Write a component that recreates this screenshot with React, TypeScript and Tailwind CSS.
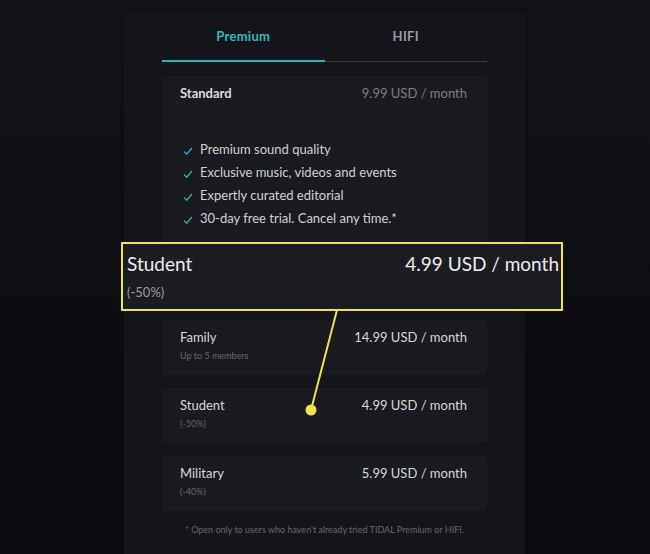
import React from "react";

const font = { fontFamily: "Lato, 'Noto Sans', sans-serif" };

function Check() {
  return (
    <svg width="10" height="10" viewBox="0 0 10 10" className="shrink-0 mt-[3px]">
      <path d="M1.5 6 L3.8 8.2 L8.5 2.5" fill="none" stroke="#2eb3b3" strokeWidth="1.3" strokeLinecap="round" strokeLinejoin="round" />
    </svg>
  );
}

function PlanCard({ name, price, sub }: { name: string; price: string; sub: string }) {
  return (
    <div className="h-[55px] rounded-[3px] bg-[#1a1b20] pl-[18px] pr-[20px] pt-[8px]">
      <div className="flex justify-between text-[13px] leading-[18px] text-[#d6d6d8]">
        <span>{name}</span>
        <span>{price}</span>
      </div>
      <div className="mt-[4px] text-[9px] leading-[12px] text-[#66676c]">{sub}</div>
    </div>
  );
}

export default function App() {
  const features = [
    "Premium sound quality",
    "Exclusive music, videos and events",
    "Expertly curated editorial",
    "30-day free trial. Cancel any time.*",
  ];
  return (
    <div className="relative w-[650px] h-[554px] overflow-hidden bg-gradient-to-b from-[#101216] to-[#0a0b0f]" style={font}>
      <div className="ml-[124px] mt-[13px] w-[401px] h-[541px] bg-[#15161b] px-[38px]">
        <div className="flex h-[49px]">
          <div className="flex-1 flex flex-col">
            <div className="flex-1 flex items-center justify-center text-[13px] font-bold text-[#2eb8b8] tracking-[0.3px]">Premium</div>
            <div className="h-[2px] bg-[#2eb3b3]" />
          </div>
          <div className="flex-1 flex flex-col">
            <div className="flex-1 flex items-center justify-center text-[13px] font-bold text-[#9c9da2] tracking-[0.3px]">HIFI</div>
            <div className="h-[2px] flex flex-col justify-end"><div className="h-[1px] bg-[#3a3b40]" /></div>
          </div>
        </div>

        <div className="mt-[14px] h-[231px] rounded-[3px] bg-[#1a1b20] pl-[18px] pr-[20px] pt-[8px]">
          <div className="flex justify-between text-[13px] leading-[18px]">
            <span className="font-bold text-[#dcdcde]">Standard</span>
            <span className="text-[#7c7d82]">9.99 USD / month</span>
          </div>
          <div className="mt-[36px] ml-[3px] flex flex-col">
            {features.map((f) => (
              <div key={f} className="flex items-center gap-[7px] h-[23px] text-[13px] text-[#d0d0d3]">
                <Check />
                <span>{f}</span>
              </div>
            ))}
          </div>
        </div>

        <div className="mt-[13px] flex flex-col gap-[13px]">
          <PlanCard name="Family" price="14.99 USD / month" sub="Up to 5 members" />
          <PlanCard name="Student" price="4.99 USD / month" sub="(-50%)" />
          <PlanCard name="Military" price="5.99 USD / month" sub="(-40%)" />
        </div>

        <div className="mt-[13px] text-center text-[9px] leading-[12px] text-[#66676c]">
          * Open only to users who haven't already tried TIDAL Premium or HIFI.
        </div>
      </div>

      <svg className="absolute left-0 top-0 pointer-events-none" width="650" height="554">
        <line x1="337" y1="310" x2="311" y2="410" stroke="#f2e34c" strokeWidth="2" />
        <circle cx="311" cy="410" r="5.5" fill="#f2e34c" />
      </svg>

      <div className="absolute left-[121px] top-[242px] w-[442px] h-[69px] border-2 border-[#f2e34c] bg-[#1c1d22] pl-[4px] pr-[2px] pt-[8px]">
        <div className="flex justify-between text-[19px] leading-[24px] text-[#ececee]">
          <span>Student</span>
          <span>4.99 USD / month</span>
        </div>
        <div className="mt-[8px] text-[13px] leading-[16px] text-[#9a9ba0]">(-50%)</div>
      </div>
    </div>
  );
}
